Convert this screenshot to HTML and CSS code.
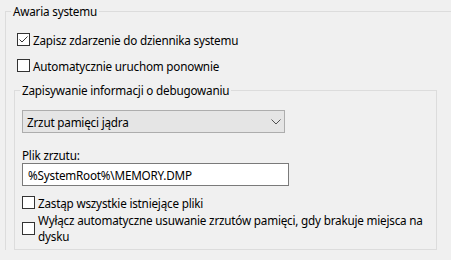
FILE: index.html
```html
<!DOCTYPE html>
<html lang="pl">
<head>
  <meta charset="UTF-8">
  <title>Awaria systemu</title>
  <link rel="stylesheet" href="styles.css">
</head>
<body>
  <fieldset class="group group-outer">
    <legend>Awaria systemu</legend>
    <label class="check check-first">
      <span class="box">
        <svg width="11" height="11" viewBox="0 0 11 11"><path d="M1.5 5.5 L4 8 L9.5 2.5" fill="none" stroke="#333" stroke-width="1"/></svg>
      </span>
      <span class="text">Zapisz zdarzenie do dziennika systemu</span>
    </label>
    <label class="check check-second">
      <span class="box"></span>
      <span class="text">Automatycznie uruchom ponownie</span>
    </label>

    <fieldset class="group group-inner">
      <legend>Zapisywanie informacji o debugowaniu</legend>
      <div class="select">
        <span>Zrzut pamięci jądra</span>
        <svg class="chevron" width="10" height="6" viewBox="0 0 10 6"><path d="M0.5 0.5 L5 5 L9.5 0.5" fill="none" stroke="#505050" stroke-width="1"/></svg>
      </div>
      <div class="field-label">Plik zrzutu:</div>
      <div class="textbox">%SystemRoot%\MEMORY.DMP</div>
      <label class="check check-third">
        <span class="box"></span>
        <span class="text">Zastąp wszystkie istniejące pliki</span>
      </label>
      <label class="check check-multi">
        <span class="box"></span>
        <span class="text">Wyłącz automatyczne usuwanie zrzutów pamięci, gdy brakuje miejsca na<br>dysku</span>
      </label>
    </fieldset>
  </fieldset>
</body>
</html>
```

FILE: styles.css
```css
*{
  margin: 0;
  padding: 0;
  box-sizing: border-box;
}
body{
  background-color: #f0f0f0;
  color: #000;
  font-family: "Noto Sans", "DejaVu Sans", sans-serif;
  font-size: 11.7px;
  letter-spacing: -0.2px;
  line-height: 16px;
  overflow: hidden;
  width: 451px;
  height: 260px;
}
.group{
  border: 1px solid #dcdcdc;
  min-width: 0;
}
.group legend{
  padding: 0 2px;
  line-height: 16px;
}
.group-outer{
  width: 446px;
  margin: 3px 0 0 5px;
  padding: 0 0 0 8px;
  border-right: none;
  border-bottom: none;
}
.group-outer legend{
  margin-left: -3px;
}
.group-outer > .check{
  margin-left: 3px;
}
.group-inner{
  width: 423px;
  margin-top: 8px;
  padding: 0 0 5px 7px;
}
.group-inner legend{
  margin-left: -2px;
}
.check{
  display: flex;
  align-items: flex-start;
  white-space: nowrap;
}
.check .box{
  width: 13px;
  height: 13px;
  margin-top: 1px;
  margin-right: 3px;
  flex-shrink: 0;
  border: 1px solid #333;
  background-color: #fff;
}
.check .box svg{
  display: block;
}
.check-first{
  margin-top: 13px;
}
.check-second{
  margin-top: 10px;
}
.check-third{
  margin-top: 9px;
}
.check-multi{
  margin-top: 1px;
}
.check-multi .box{
  margin-top: 10px;
}
.select{
  width: 263px;
  height: 23px;
  margin-top: 12px;
  padding: 0 3px 0 4px;
  display: flex;
  align-items: center;
  justify-content: space-between;
  background-color: #e5e5e5;
  border: 1px solid #adadad;
}
.field-label{
  margin-top: 14px;
}
.textbox{
  width: 267px;
  height: 23px;
  padding: 0 5px;
  display: flex;
  align-items: center;
  background-color: #fff;
  border: 1px solid #7a7a7a;
}
```
